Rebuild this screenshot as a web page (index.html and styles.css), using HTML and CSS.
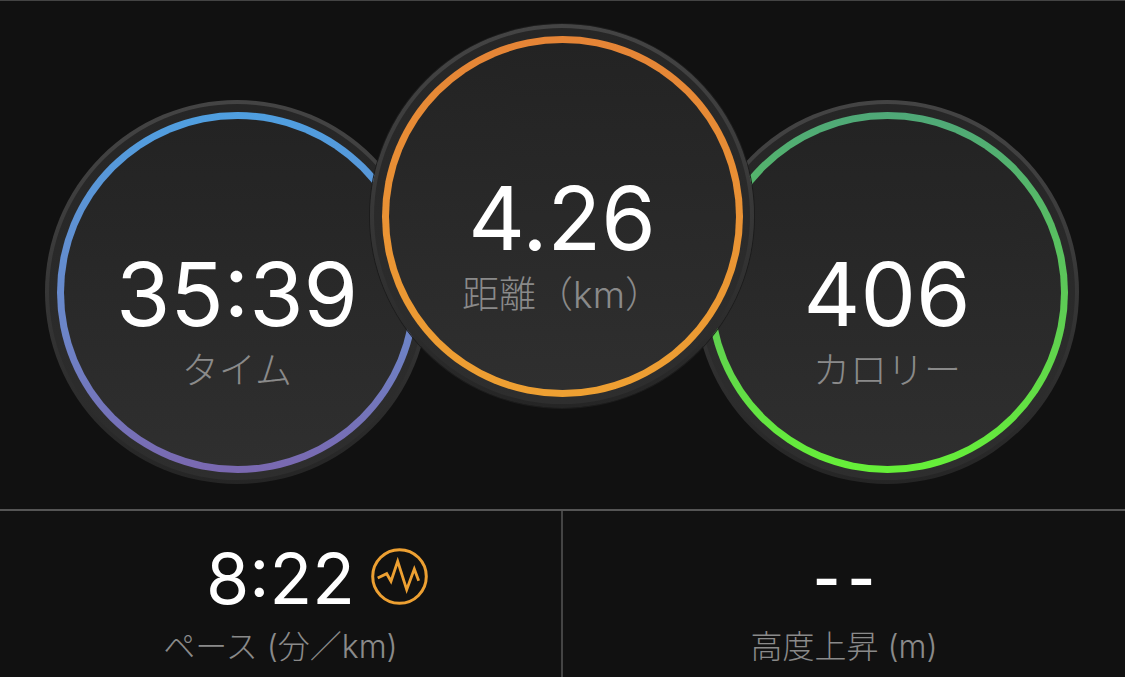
FILE: index.html
```html
<!DOCTYPE html>
<html lang="ja">
<head>
    <meta charset="UTF-8">
    <title>Activity Stats</title>
    <link rel="stylesheet" href="styles.css">
</head>
<body>
    <div class="gauges">
        <div class="gauge gauge-time">
            <div class="gauge-ring">
                <div class="gauge-face">
                    <div class="gauge-value">35:39</div>
                    <div class="gauge-label">タイム</div>
                </div>
            </div>
        </div>
        <div class="gauge gauge-distance">
            <div class="gauge-ring">
                <div class="gauge-face">
                    <div class="gauge-value">4.26</div>
                    <div class="gauge-label">距離（km）</div>
                </div>
            </div>
        </div>
        <div class="gauge gauge-calories">
            <div class="gauge-ring">
                <div class="gauge-face">
                    <div class="gauge-value">406</div>
                    <div class="gauge-label">カロリー</div>
                </div>
            </div>
        </div>
    </div>

    <div class="stats">
        <div class="stat stat-pace">
            <div class="stat-value">
                8:22
                <svg class="stat-icon" viewBox="0 0 57 57" fill="none" stroke="#eda032" stroke-width="3">
                    <circle cx="28.5" cy="28.5" r="26.8"/>
                    <polyline stroke-width="2.8" points="6.7,30 15.7,25.7 20,33.3 26.7,13.3 35.7,41.7 43.3,21 47.7,32.7"/>
                </svg>
            </div>
            <div class="stat-label">ペース (分／km)</div>
        </div>
        <div class="stat">
            <div class="stat-value stat-empty">--</div>
            <div class="stat-label">高度上昇 (m)</div>
        </div>
    </div>
</body>
</html>
```

FILE: styles.css
```css
* {
    box-sizing: border-box;
}
body {
    margin: 0;
    height: 677px;
    overflow: hidden;
    background: #111;
    color: #fff;
    font-family: Inter, "Liberation Sans", "Noto Sans CJK JP", sans-serif;
}
.gauges {
    display: flex;
    justify-content: center;
    align-items: flex-start;
    height: 509px;
    padding: 23px 1px 0 0;
    border-top: 1px solid #444;
}
.gauge {
    position: relative;
    flex: none;
    width: 384px;
    height: 384px;
    padding: 4px;
    border-radius: 50%;
    background: linear-gradient(#444, #3a3a3a 40%, #252525);
}
.gauge-time,
.gauge-calories {
    margin-top: 76px;
}
.gauge-distance {
    z-index: 1;
    margin: 0 -59px;
    box-shadow: 0 0 0 1px #1c1c1c;
}
.gauge-ring {
    width: 100%;
    height: 100%;
    padding: 7.5px;
    border-radius: 50%;
    background: linear-gradient(#262626, #2e2e2e);
}
.gauge-face {
    display: flex;
    flex-direction: column;
    align-items: center;
    height: 100%;
    border-radius: 50%;
    border: 7px solid transparent;
    background:
        linear-gradient(#232323, #2f2f2f) padding-box,
        var(--ring) border-box;
}
.gauge-time {
    --ring: linear-gradient(#4f9fe0, #6c85c8 60%, #7a68b0);
}
.gauge-distance {
    --ring: linear-gradient(#e58436, #eea032);
}
.gauge-calories {
    --ring: linear-gradient(#4fa878, #5fd050 60%, #66f038);
}
.gauge-value {
    margin-top: 123px;
    font-size: 88px;
    font-weight: 400;
    line-height: 104px;
}
.gauge-label {
    color: #8a8a8a;
    font-size: 37px;
    font-weight: 300;
    line-height: 50px;
    white-space: nowrap;
}
.stats {
    display: flex;
    height: 168px;
    border-top: 2px solid #555;
}
.stat {
    flex: 1;
    display: flex;
    flex-direction: column;
    align-items: center;
    padding-top: 28px;
}
.stat-pace {
    flex: none;
    width: 561px;
}
.stat + .stat {
    border-left: 2px solid #444;
}
.stat-value {
    position: relative;
    font-size: 70px;
    font-weight: 400;
    line-height: 80px;
}
.stat-empty {
    margin: 0 -8px 6px 0;
    font-family: "Liberation Sans", sans-serif;
    font-size: 80px;
    letter-spacing: 8px;
    line-height: 74px;
}
.stat-icon {
    position: absolute;
    top: 9px;
    left: 165px;
    width: 57px;
    height: 57px;
}
.stat-label {
    margin-top: 8px;
    color: #8a8a8a;
    font-size: 32px;
    font-weight: 300;
    line-height: 40px;
}
```
